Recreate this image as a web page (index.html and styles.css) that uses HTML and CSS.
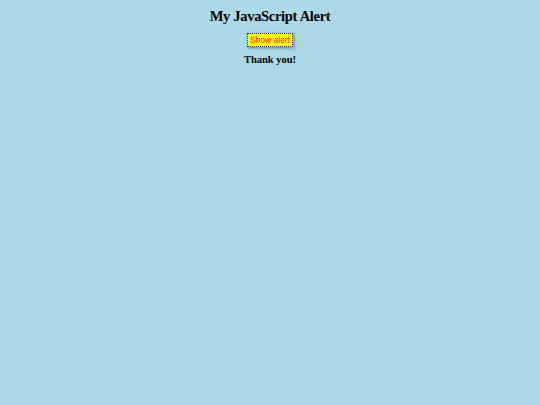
FILE: index.html
```html
<!DOCTYPE html>
<html>
<head>
<meta charset="utf-8">
<link rel="stylesheet" href="styles.css">
</head>
<body>
<div class="page">
  <h1 class="title">My JavaScript Alert</h1>
  <button class="alert-btn" type="button">Show alert</button>
  <p class="thanks">Thank you!</p>
</div>
</body>
</html>
```
FILE: styles.css
```css
html, body {
  margin: 0;
  padding: 0;
  background: #add8e6;
  height: 100%;
}
.page {
  display: flex;
  flex-direction: column;
  align-items: center;
  padding-top: 8px;
  font-family: "Liberation Serif", "Times New Roman", serif;
}
.title {
  font-size: 14.5px;
  letter-spacing: -0.3px;
  font-weight: bold;
  margin: 0 0 8px 0;
  color: #000;
}
.alert-btn {
  font-family: "Liberation Sans", Arial, sans-serif;
  font-size: 8.5px;
  color: #ff2000;
  background: #ffff00;
  border: 1px dotted #333;
  padding: 1px 2px;
  box-shadow: 1px 1px 3px rgba(0,0,0,0.4);
  margin: 0;
}
.thanks {
  font-size: 10.5px;
  font-weight: bold;
  margin: 7px 0 0 0;
  color: #000;
}
```
